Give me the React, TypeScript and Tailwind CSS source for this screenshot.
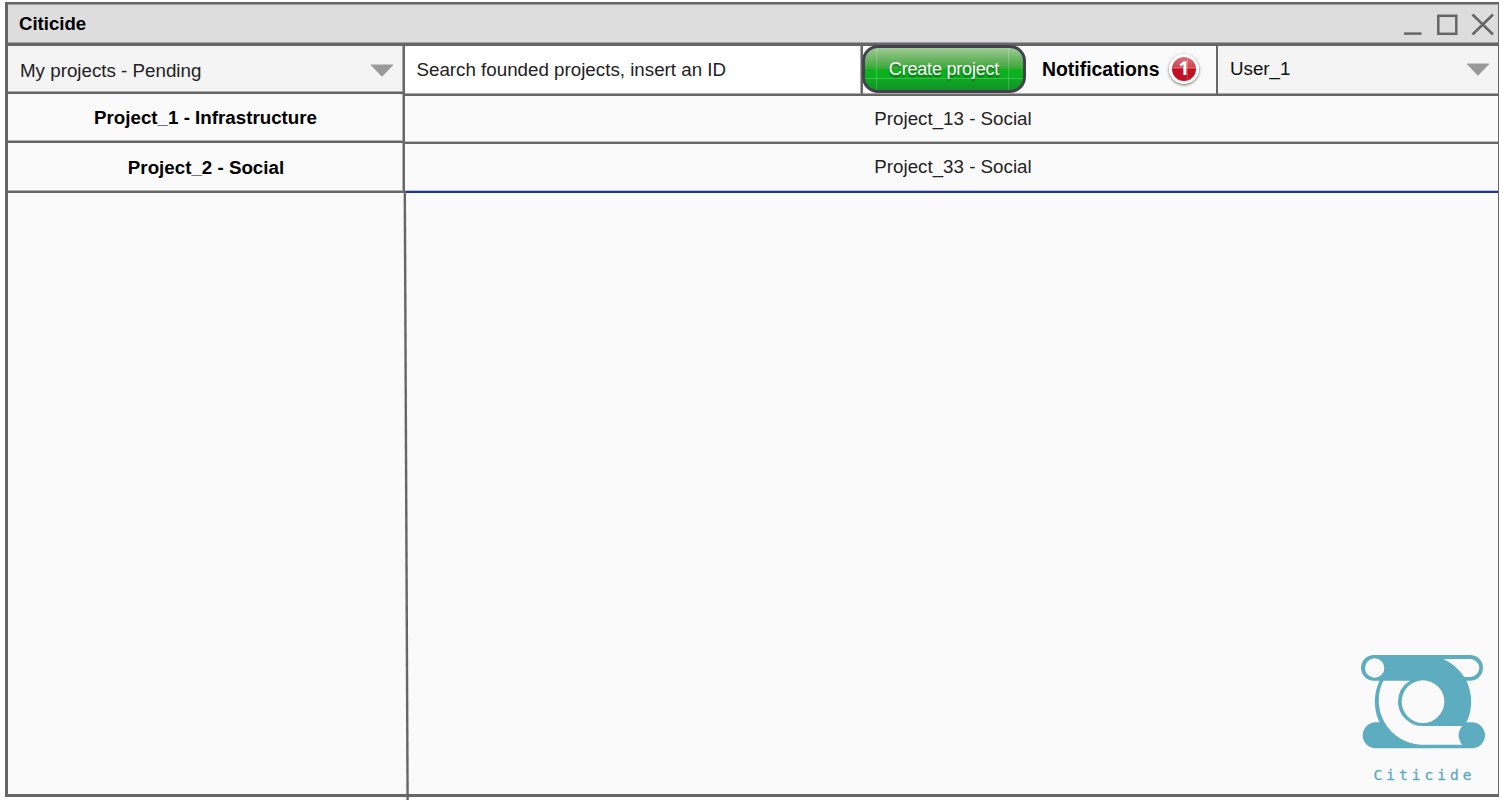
import React from "react";

const Caret = () => (
  <svg width="24" height="14" viewBox="0 0 24 14" className="shrink-0">
    <path d="M1 1.2 Q0.6 0.6 1.4 0.5 H22.6 Q23.4 0.6 23 1.2 L12.8 12 Q12 12.8 11.2 12 Z" fill="#999999" />
  </svg>
);

const Logo = () => (
  <div className="flex w-[150px] flex-col items-center text-[#5eacbf]">
    <svg width="150" height="110" viewBox="0 0 450 330">
      <defs>
        <clipPath id="band">
          <rect x="0" y="30" width="450" height="279" />
        </clipPath>
      </defs>
      <g fill="#5eacbf">
        <rect x="33" y="30" width="366" height="77" rx="38.5" />
        <rect x="38" y="232" width="367" height="78" rx="39" />
        <circle cx="219" cy="170" r="144.5" clipPath="url(#band)" />
      </g>
      <g fill="#fafafa">
        <circle cx="74" cy="69" r="29" />
        <path d="M280 42 H361 A27 27 0 0 1 361 96 H343 A150 150 0 0 0 280 42 Z" />
        <circle cx="219" cy="170" r="64" />
        <path d="M100 107 H180 A74 74 0 0 0 144 170 A74 73 0 0 0 218 243 H337 A41 41 0 0 0 337 299 H212 A133 133 0 0 1 100 107 Z" />
      </g>
    </svg>
    <span className="mt-[11px] -ml-px font-['DejaVu_Sans_Mono',monospace] text-[14.5px] leading-[18px] tracking-[4px] [-webkit-text-stroke:0.3px_#5eacbf]">Citicide</span>
  </div>
);

export default function App() {
  return (
    <div className="relative h-[800px] w-[1500px] overflow-hidden bg-white pl-[5px] pt-[2px] font-['Liberation_Sans',Arial,sans-serif] text-[18.75px] leading-6 text-black">
      <div className="flex h-[795px] w-[1494px] flex-col border-2 border-l-[3px] border-r-[1px] border-b-[3px] border-[#666666] bg-[#fafafa]">
        <header className="flex h-[42px] shrink-0 items-center justify-between border-b-[3px] border-[#666666] bg-[#dddddd] pl-[11px] pr-[3px] shadow-[inset_0_1px_0_#a0a0a0,inset_0_-1px_0_#a0a0a0]">
          <span className="text-[18.6px] font-bold">Citicide</span>
          <svg width="92" height="26" viewBox="0 0 92 26" fill="none" stroke="#666666" strokeWidth="2.5">
            <path d="M1 22.6 H18.5" />
            <rect x="35.3" y="4.8" width="18" height="18" />
            <path d="M69.5 3.5 L90 23.5 M90 3.5 L69.5 23.5" />
          </svg>
        </header>
        <div className="flex h-[147px] shrink-0">
          <aside className="flex w-[397px] shrink-0 flex-col border-r-2 border-[#666666]">
            <div className="flex h-[48px] items-center justify-between border-b-2 border-[#666666] bg-[#f4f4f4] pl-3 pr-[9px] pt-1 shadow-[inset_-1px_-1px_0_#a8a8a8]">
              <span className="text-[#222222]">My projects - Pending</span>
              <Caret />
            </div>
            <div className="flex h-[49px] items-center justify-center border-b-2 border-[#666666] font-bold shadow-[inset_-1px_-1px_0_#b0b0b0]">Project_1 - Infrastructure</div>
            <div className="flex h-[50px] items-center justify-center border-b-2 border-[#666666] pl-px pt-[2px] font-bold shadow-[inset_-1px_-1px_0_#b0b0b0]">Project_2 - Social</div>
          </aside>
          <main className="flex flex-1 flex-col">
            <div className="flex h-[50px] items-stretch border-b-[2px] border-[#666666] shadow-[inset_0_-1px_0_#aaaaaa]">
              <div className="flex w-[458px] items-center border-r-2 border-[#666666] bg-white pl-[11.5px] text-[#222222] shadow-[inset_-1px_-1px_0_#aaaaaa]">Search founded projects, insert an ID</div>
              <button className="relative -mt-px mb-px -ml-px flex w-[164px] items-center justify-center overflow-hidden rounded-[16px] border-[3px] border-[#41424c] bg-[linear-gradient(180deg,#9fcb97_0%,#68b460_28%,#35aa35_50%,#0cb31c_51%,#0cad20_72%,#12902a_100%)] text-[18px] tracking-[-0.2px] text-white [text-shadow:0_2px_2px_rgba(0,0,0,0.45)]">
                Create project
                <span className="absolute inset-y-0 left-[11px] w-px bg-white/20" />
                <span className="absolute inset-y-0 right-[14px] w-px bg-white/20" />
                <span className="absolute inset-x-0 top-[30px] h-px bg-white/20" />
              </button>
              <div className="flex w-[190px] items-center pb-[2px] pl-4 font-bold">
                <span className="w-[127px] text-[19.4px]">Notifications</span>
                <span className="relative flex h-[30px] w-[30px] items-center justify-center rounded-full border-[3px] border-white bg-[linear-gradient(180deg,#dd737c_0%,#cd3d49_48%,#c01022_50%,#c01022_100%)] font-['Open_Sans',sans-serif] text-[19px] text-white shadow-[0_1px_3px_rgba(0,0,0,0.6)]">
                  <span className="-mt-[3px]">1</span>
                  <span className="absolute inset-y-0 left-[15px] w-px bg-white/20" />
                  <span className="absolute inset-x-0 top-[10px] h-px bg-white/20" />
                </span>
              </div>
              <div className="flex flex-1 items-center justify-between border-l-2 border-[#666666] bg-[#f4f4f4] pl-3 pr-2 shadow-[inset_0_-1px_0_#aaaaaa]">
                <span className="-mt-[2px] text-[#111111]">User_1</span>
                <Caret />
              </div>
            </div>
            <div className="flex h-[48px] items-center justify-center border-b-2 border-[#666666] pl-[3px] text-[#222222] shadow-[inset_0_-1px_0_#c0c0c0]">Project_13 - Social</div>
            <div className="flex h-[49px] items-center justify-center border-b-2 border-[#20378c] pb-[2px] pl-[3px] text-[#222222] shadow-[inset_0_-1px_0_#b8c3dd]">Project_33 - Social</div>
          </main>
        </div>
        <section className="-mr-[2px] flex flex-1 items-end justify-end pb-[10px]">
          <Logo />
        </section>
      </div>
      <svg width="10" height="610" viewBox="0 0 10 610" className="absolute left-[401px] top-[190px]">
        <path d="M3.8 1 L6.6 610" stroke="#666666" strokeWidth="2.4" />
      </svg>
    </div>
  );
}
